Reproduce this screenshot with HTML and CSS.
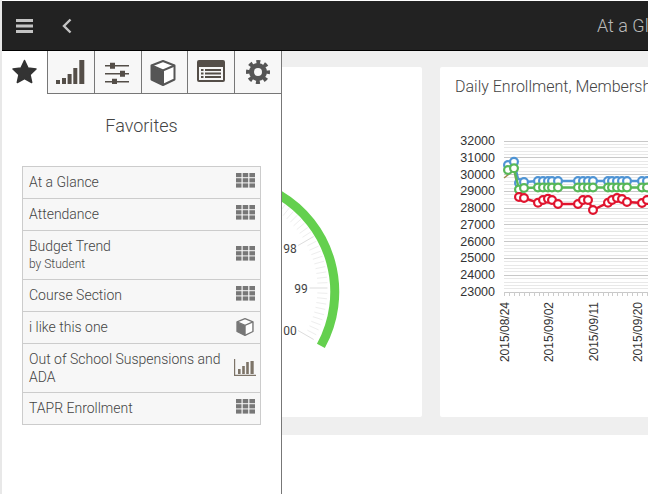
FILE: index.html
```html
<!doctype html>
<html>
<head>
<meta charset="utf-8">
<title>At a Glance</title>
<link rel="stylesheet" href="styles.css">
</head>
<body>
<svg class="defs" aria-hidden="true">
	<symbol id="i-grid" viewBox="0 0 19 15">
		<rect x="0" y="0" width="5.5" height="4.2"/><rect x="6.7" y="0" width="5.5" height="4.2"/><rect x="13.4" y="0" width="5.6" height="4.2"/>
		<rect x="0" y="5.2" width="5.5" height="4.2"/><rect x="6.7" y="5.2" width="5.5" height="4.2"/><rect x="13.4" y="5.2" width="5.6" height="4.2"/>
		<rect x="0" y="10.4" width="5.5" height="4.2"/><rect x="6.7" y="10.4" width="5.5" height="4.2"/><rect x="13.4" y="10.4" width="5.6" height="4.2"/>
	</symbol>
	<symbol id="i-cube" viewBox="0 0 26 26">
		<path d="M13 1 24.5 5.5V19.5L13 25 1.5 19.5V5.5Z" fill="#fff" stroke="currentColor" stroke-width="2" stroke-linejoin="round"/>
		<path d="M1.5 6 13 11V25L1.5 19.5Z" fill="currentColor"/>
		<path d="M1.5 5.5 13 10.5 24.5 5.5M13 10.5V25" fill="none" stroke="currentColor" stroke-width="2"/>
	</symbol>
	<symbol id="i-bars" viewBox="0 0 22 17">
		<path d="M0 0h1.2v15.8H22V17H0Z"/>
		<rect x="4" y="10" width="2.6" height="5"/><rect x="8.2" y="7" width="2.6" height="8"/><rect x="12.2" y="3" width="2.6" height="12"/><rect x="16.5" y="2" width="3.2" height="13"/>
	</symbol>
</svg>
<div class="page">
	<div class="topbar">
		<svg class="menu" width="17" height="14" viewBox="0 0 17 14"><path d="M0 0h17v3H0ZM0 5.5h17v3H0ZM0 11h17v3H0Z"/></svg>
		<svg class="back" width="10" height="16" viewBox="0 0 10 16"><path d="M8.5 1.5 2 8l6.5 6.5" fill="none" stroke-width="2.4"/></svg>
		<div class="title">At a Glance</div>
	</div>
	<div class="dash">
		<div class="card">
			<svg id="gauge" width="402" height="350" viewBox="20 67 402 350"></svg>
		</div>
		<div class="card">
			<div class="cardtitle">Daily Enrollment, Membership and Attendance</div>
			<svg id="chart" width="402" height="320" viewBox="440 97 402 320"></svg>
		</div>
	</div>
	<div class="side">
		<div class="tabs">
			<div class="tab on">
				<svg width="27" height="25" viewBox="0 0 27 25"><path d="M13.5 1.5 17 9l8 1-6 5.6L20.700 23.500 13.500 19.500 6.300 23.500 8 15.600 2 10l8-1Z" fill="#333" stroke="#333" stroke-width="1.500" stroke-linejoin="round"/></svg>
			</div>
			<div class="tab">
				<svg class="low" width="29" height="24" viewBox="0 0 29 24"><path d="M0 20h4v4H0ZM6 18h4v6H6ZM11.600 14h4v10h-4ZM17.300 8h4v16h-4ZM23.300 0h5v24h-5Z"/></svg>
			</div>
			<div class="tab">
				<svg class="nudge" width="24" height="22" viewBox="0 0 24 22"><path d="M0 3h24v1.500H0ZM0 11h24v1.500H0ZM0 19h24v1.500H0Z"/><path d="M5 .8h5v6H5ZM15 8.800h5v6h-5ZM7 16.800h5v6H7Z"/></svg>
			</div>
			<div class="tab">
				<svg class="cube nudge" width="26" height="26"><use href="#i-cube"/></svg>
			</div>
			<div class="tab">
				<svg width="28" height="22" viewBox="0 0 28 22"><path fill-rule="evenodd" d="M2 0h24a2 2 0 0 1 2 2v18a2 2 0 0 1-2 2H2a2 2 0 0 1-2-2V2a2 2 0 0 1 2-2ZM2 7v13h24V7Z"/><path d="M4 9h2.500v2H4ZM8 9h16v2H8ZM4 12.500h2.500v2H4ZM8 12.500h16v2H8ZM4 16h2.500v2H4ZM8 16h16v2H8Z"/></svg>
			</div>
			<div class="tab">
				<svg class="low" width="24" height="24" viewBox="0 0 24 24"><circle cx="12" cy="12" r="6.500" fill="none"/><circle class="teeth" cx="12" cy="12" r="10" fill="none"/></svg>
			</div>
		</div>
		<div class="sidehead">Favorites</div>
		<div class="favs">
			<div class="fav short"><div class="favname">At a Glance</div><svg class="ico lift" width="19" height="15"><use href="#i-grid"/></svg></div>
			<div class="fav short"><div class="favname">Attendance</div><svg class="ico lift" width="19" height="15"><use href="#i-grid"/></svg></div>
			<div class="fav"><div class="favname">Budget Trend<div class="favsub">by Student</div></div><svg class="ico lift" width="19" height="15"><use href="#i-grid"/></svg></div>
			<div class="fav short"><div class="favname">Course Section</div><svg class="ico lift" width="19" height="15"><use href="#i-grid"/></svg></div>
			<div class="fav short"><div class="favname">i like this one</div><svg class="ico cubeico" width="18" height="18"><use href="#i-cube"/></svg></div>
			<div class="fav"><div class="favname">Out of School Suspensions and ADA</div><svg class="ico barsico" width="22" height="17"><use href="#i-bars"/></svg></div>
			<div class="fav short"><div class="favname">TAPR Enrollment</div><svg class="ico lift" width="19" height="15"><use href="#i-grid"/></svg></div>
		</div>
	</div>
</div>
<script src="script.js"></script>
</body>
</html>
```

FILE: styles.css
```css
*{margin:0; padding:0; box-sizing:border-box;}
html,body{height:100%; overflow:hidden; background:#fff;}
body{font-family:Roboto,"Liberation Sans",sans-serif; font-weight:300; color:#444;}
.defs{width:0; height:0; position:absolute;}
.page{
	position:relative;
	height:100%;
	margin-left:2px;
	padding-top:1px;
	overflow:hidden;
	box-shadow:-2px 0 0 #e8e8e8;
}
.topbar{
	display:flex;
	align-items:center;
	height:50px;
	padding-left:14px;
	background:#222;
	border-bottom:1px solid #000;
}
.menu{fill:#c4c4c4; flex:none;}
.back{stroke:#c4c4c4; flex:none; margin-left:29px;}
.title{
	margin-left:525px;
	font-size:18px;
	color:#b9b9b9;
	white-space:nowrap;
}
.dash{
	display:flex;
	gap:18px;
	width:860px;
	height:384px;
	padding:16px 18px 18px;
	background:#efefef;
}
.card{
	flex:none;
	width:402px;
	height:350px;
	background:#fff;
	border-radius:2px;
}
.card svg{display:block;}
.cardtitle{
	height:30px;
	padding:10px 15px 0;
	font-size:16px;
	line-height:20px;
	white-space:nowrap;
}
.side{
	position:absolute;
	left:0;
	top:51px;
	bottom:0;
	width:280px;
	background:#fff;
	border-right:1px solid #777;
}
.tabs{display:flex; height:43px;}
.tab{
	flex:1;
	display:flex;
	align-items:center;
	justify-content:center;
	padding-bottom:2px;
	background:#f7f7f7;
	border-left:1px solid #777;
	border-bottom:1px solid #777;
}
.tab.on{flex:none; width:45px; background:#fff; border:0; padding-bottom:3px;}
.tab svg{fill:#544e48; stroke:#555; stroke-width:0;}
.tab .cube{color:#555;}
.tab .nudge{margin:3px 2px 0 0;}
.tab .low{margin-top:2px;}
.tab circle{stroke:#555; stroke-width:5;}
.tab .teeth{stroke-width:4; stroke-dasharray:3.93 3.93; stroke-dashoffset:2;}
.sidehead{
	height:72px;
	padding-top:20px;
	text-align:center;
	font-size:18px;
	line-height:24px;
}
.favs{
	width:239px;
	margin-left:20px;
	border:1px solid #ccc;
	border-bottom:0;
}
.fav{
	display:flex;
	align-items:center;
	justify-content:space-between;
	min-height:32px;
	padding:6px 5px 6px 6px;
	background:#f7f7f7;
	border-bottom:1px solid #ccc;
	font-size:14px;
	line-height:18px;
}
.fav.short{padding-top:5px; padding-bottom:7px;}
.favname{flex:1; padding-right:10px;}
.favsub{font-size:12px; line-height:18px;}
.ico{flex:none; fill:#777; color:#777;}
.lift{margin-bottom:3px;}
.short .lift{margin-bottom:2px;}
.cubeico{margin-right:1px;}
.barsico{margin-bottom:2px; margin-right:-1px; fill:#7d7468;}
```

FILE: script.js
```js
var NS='http://www.w3.org/2000/svg';
function add(parent,tag,attrs,text){
	var el=document.createElementNS(NS,tag);
	for(var k in attrs){el.setAttribute(k,attrs[k]);}
	if(text){el.textContent=text;}
	parent.appendChild(el);
	return el;
}

// gauge
var gauge=document.getElementById('gauge');
var cx=224.5,cy=288;
function pt(r,deg){
	var a=deg*Math.PI/180;
	return (cx+r*Math.cos(a)).toFixed(1)+' '+(cy+r*Math.sin(a)).toFixed(1);
}
for(var d=-150;d<=30;d+=3){
	var major=(d%30==0);
	add(gauge,'path',{d:'M'+pt(major?85:93,d)+'L'+pt(103,d),stroke:major?'#ddd':'#eee','stroke-width':1});
}
add(gauge,'path',{d:'M'+pt(112.5,-150)+'A112.5 112.5 0 0 1 '+pt(112.5,31),fill:'none',stroke:'#64d04e','stroke-width':9});
var glabels=[['98',290,253],['99',301,293],['00',290,335]];
glabels.forEach(function(l){
	add(gauge,'text',{x:l[1],y:l[2],'text-anchor':'middle',style:'font:400 12px Roboto,sans-serif',fill:'#444'},l[0]);
});

// chart
var chart=document.getElementById('chart');
var top0=141,step=16.78,left0=504;
for(var i=0;i<=45;i++){
	var y=top0+i*step/5;
	add(chart,'path',{d:'M'+left0+' '+y.toFixed(1)+'H860',stroke:i%5==0?'#c8c8c8':'#e8e8e8','stroke-width':1,'shape-rendering':'crispEdges'});
}
for(var v=0;v<=9;v++){
	add(chart,'text',{x:495,y:top0+v*step+4,'text-anchor':'end',style:'font:12.5px "Liberation Sans",sans-serif',fill:'#333'},String(32000-v*1000));
}
for(var t=0;t<40;t++){
	var tx=Math.round(left0+t*4.93)+.5;
	add(chart,'path',{d:'M'+tx+' 292V296',stroke:'#ccc','stroke-width':1});
}
['2015/08/24','2015/09/02','2015/09/11','2015/09/20'].forEach(function(s,n){
	var lx=left0+5+n*44.4;
	add(chart,'text',{transform:'translate('+lx+' 302) rotate(-90)','text-anchor':'end',style:'font:12px "Liberation Sans",sans-serif',fill:'#333'},s);
});

var xs=[508,514,519,524,538,543,548,552,558,578,583,588,593,608,612,617,622,627,642,647];
var blue=[165,161.7,183,182,181,181,181,181,181,181,181,181,181,181,181,181,181,181,181,181];
var green=[170,168.3,189.5,188,187.5,187.5,187.5,187.5,187.5,187.5,187.5,187.5,187.5,187.5,187.5,187.5,187.5,187.5,187.5,187.5];
var red=[null,null,197,198,202.7,200,198.7,200,204,204,200,200,210,202.7,200,198,199,202,203,200];
function series(ys,color){
	var d='',i;
	for(i=0;i<xs.length;i++){
		if(ys[i]==null){continue;}
		d+=(d?'L':'M')+xs[i]+' '+ys[i];
	}
	add(chart,'path',{d:d,fill:'none',stroke:color,'stroke-width':2.4});
	for(i=0;i<xs.length;i++){
		if(ys[i]==null){continue;}
		add(chart,'circle',{cx:xs[i],cy:ys[i],r:3.9,fill:'#fff',stroke:color,'stroke-width':2.2});
	}
}
add(chart,'path',{d:'M504 178 514 170 519 197',fill:'none',stroke:'#a08a50','stroke-width':1.5});
series(blue,'#4f94d4');
series(green,'#58b858');
series(red,'#e0142e');
```
